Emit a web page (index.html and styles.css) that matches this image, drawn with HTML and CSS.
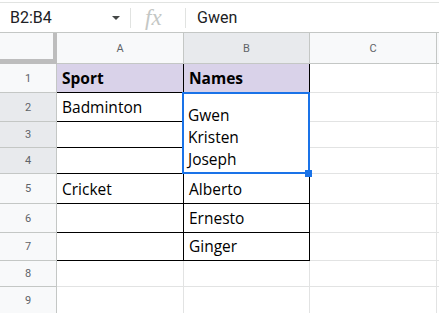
FILE: index.html
```html
<!DOCTYPE html>
<html>
<head>
<meta charset="utf-8">
<title>Sheet</title>
<link rel="stylesheet" href="styles.css">
</head>
<body>
<div class="formula-bar">
    <div class="name-box"><span>B2:B4</span><span class="caret"></span></div>
    <div class="fx">fx</div>
    <div class="formula">Gwen</div>
</div>
<div class="sheet">
    <div class="corner"></div>
    <div class="col-head">A</div>
    <div class="col-head sel">B</div>
    <div class="col-head">C</div>
    <div class="col-head"></div>

    <div class="row-head">1</div>
    <div class="cell boxed title">Sport</div>
    <div class="cell boxed title">Names</div>
    <div class="cell"></div>
    <div class="cell"></div>

    <div class="row-head sel">2</div>
    <div class="cell boxed">Badminton</div>
    <div class="cell boxed merged">Gwen<br>Kristen<br>Joseph</div>
    <div class="cell"></div>
    <div class="cell"></div>

    <div class="row-head sel">3</div>
    <div class="cell boxed"></div>
    <div class="cell"></div>
    <div class="cell"></div>

    <div class="row-head sel">4</div>
    <div class="cell boxed"></div>
    <div class="cell"></div>
    <div class="cell"></div>

    <div class="row-head">5</div>
    <div class="cell boxed">Cricket</div>
    <div class="cell boxed">Alberto</div>
    <div class="cell"></div>
    <div class="cell"></div>

    <div class="row-head">6</div>
    <div class="cell boxed"></div>
    <div class="cell boxed">Ernesto</div>
    <div class="cell"></div>
    <div class="cell"></div>

    <div class="row-head">7</div>
    <div class="cell boxed"></div>
    <div class="cell boxed">Ginger</div>
    <div class="cell"></div>
    <div class="cell"></div>

    <div class="row-head">8</div>
    <div class="cell"></div>
    <div class="cell"></div>
    <div class="cell"></div>
    <div class="cell"></div>

    <div class="row-head">9</div>
    <div class="cell"></div>
    <div class="cell"></div>
    <div class="cell"></div>
    <div class="cell"></div>
</div>
</body>
</html>
```

FILE: styles.css
```css
body{
    margin:0;
    background:#fff;
    font-family:Roboto, "Liberation Sans", sans-serif;
    overflow:hidden;
}
.formula-bar{
    display:flex;
    align-items:center;
    height:30px;
    margin-top:2px;
    border-top:1px solid #e1e3e1;
    box-sizing:border-box;
}
.name-box{
    width:131px;
    height:20px;
    box-sizing:border-box;
    padding:0 10px 0 10px;
    display:flex;
    align-items:center;
    justify-content:space-between;
    border-right:1px solid #e1e3e1;
    font-size:16px;
    color:#202124;
}
.caret{
    width:0;
    height:0;
    border-left:4px solid transparent;
    border-right:4px solid transparent;
    border-top:4px solid #444746;
}
.fx{
    width:55px;
    height:20px;
    box-sizing:border-box;
    padding-left:14px;
    border-right:1px solid #e1e3e1;
    font:italic 23px/20px "Liberation Serif", serif;
    color:#c4c7c5;
}
.formula{
    padding-left:11px;
    font-size:16px;
    color:#202124;
}
.sheet{
    display:grid;
    grid-template-columns:57px 127px 126px 127px 1fr;
    grid-template-rows:31px 29px 29px 26px 26px 30px 29px 28px 26px 27px;
    border-top:1px solid #c4c7c5;
}
.sheet > div{
    box-sizing:border-box;
    border-right:1px solid #e2e3e3;
    border-bottom:1px solid #e2e3e3;
}
.sheet > .corner{
    background:#f8f9fa;
    border-right:4px solid #bdbdbd;
    border-bottom:5px solid #bdbdbd;
}
.sheet > .col-head,
.sheet > .row-head{
    background:#f8f9fa;
    border-color:#c4c7c5;
    color:#5f6368;
    font-size:11px;
    display:flex;
    align-items:center;
    justify-content:center;
}
.sheet > .sel{
    background:#e8eaed;
}
.cell{
    font:15.5px/22px "Open Sans", sans-serif;
    color:#000;
    padding:0 4px 3px 5px;
    display:flex;
    align-items:flex-end;
    white-space:nowrap;
}
.sheet > .boxed{
    border-right-color:#000;
    border-bottom-color:#000;
}
.title{
    background:#d9d2e9;
    font-weight:bold;
}
.merged{
    grid-row:span 3;
    position:relative;
    display:block;
    padding:11px 4px 0 4px;
}
/* selection frame over B2:B4 */
.merged::after{
    content:"";
    position:absolute;
    left:-2px;
    top:-1px;
    right:-1px;
    bottom:-1px;
    border:2px solid #1a73e8;
}
.merged::before{
    content:"";
    position:absolute;
    right:-3px;
    bottom:-4px;
    width:7px;
    height:7px;
    background:#1a73e8;
    z-index:1;
}
```
